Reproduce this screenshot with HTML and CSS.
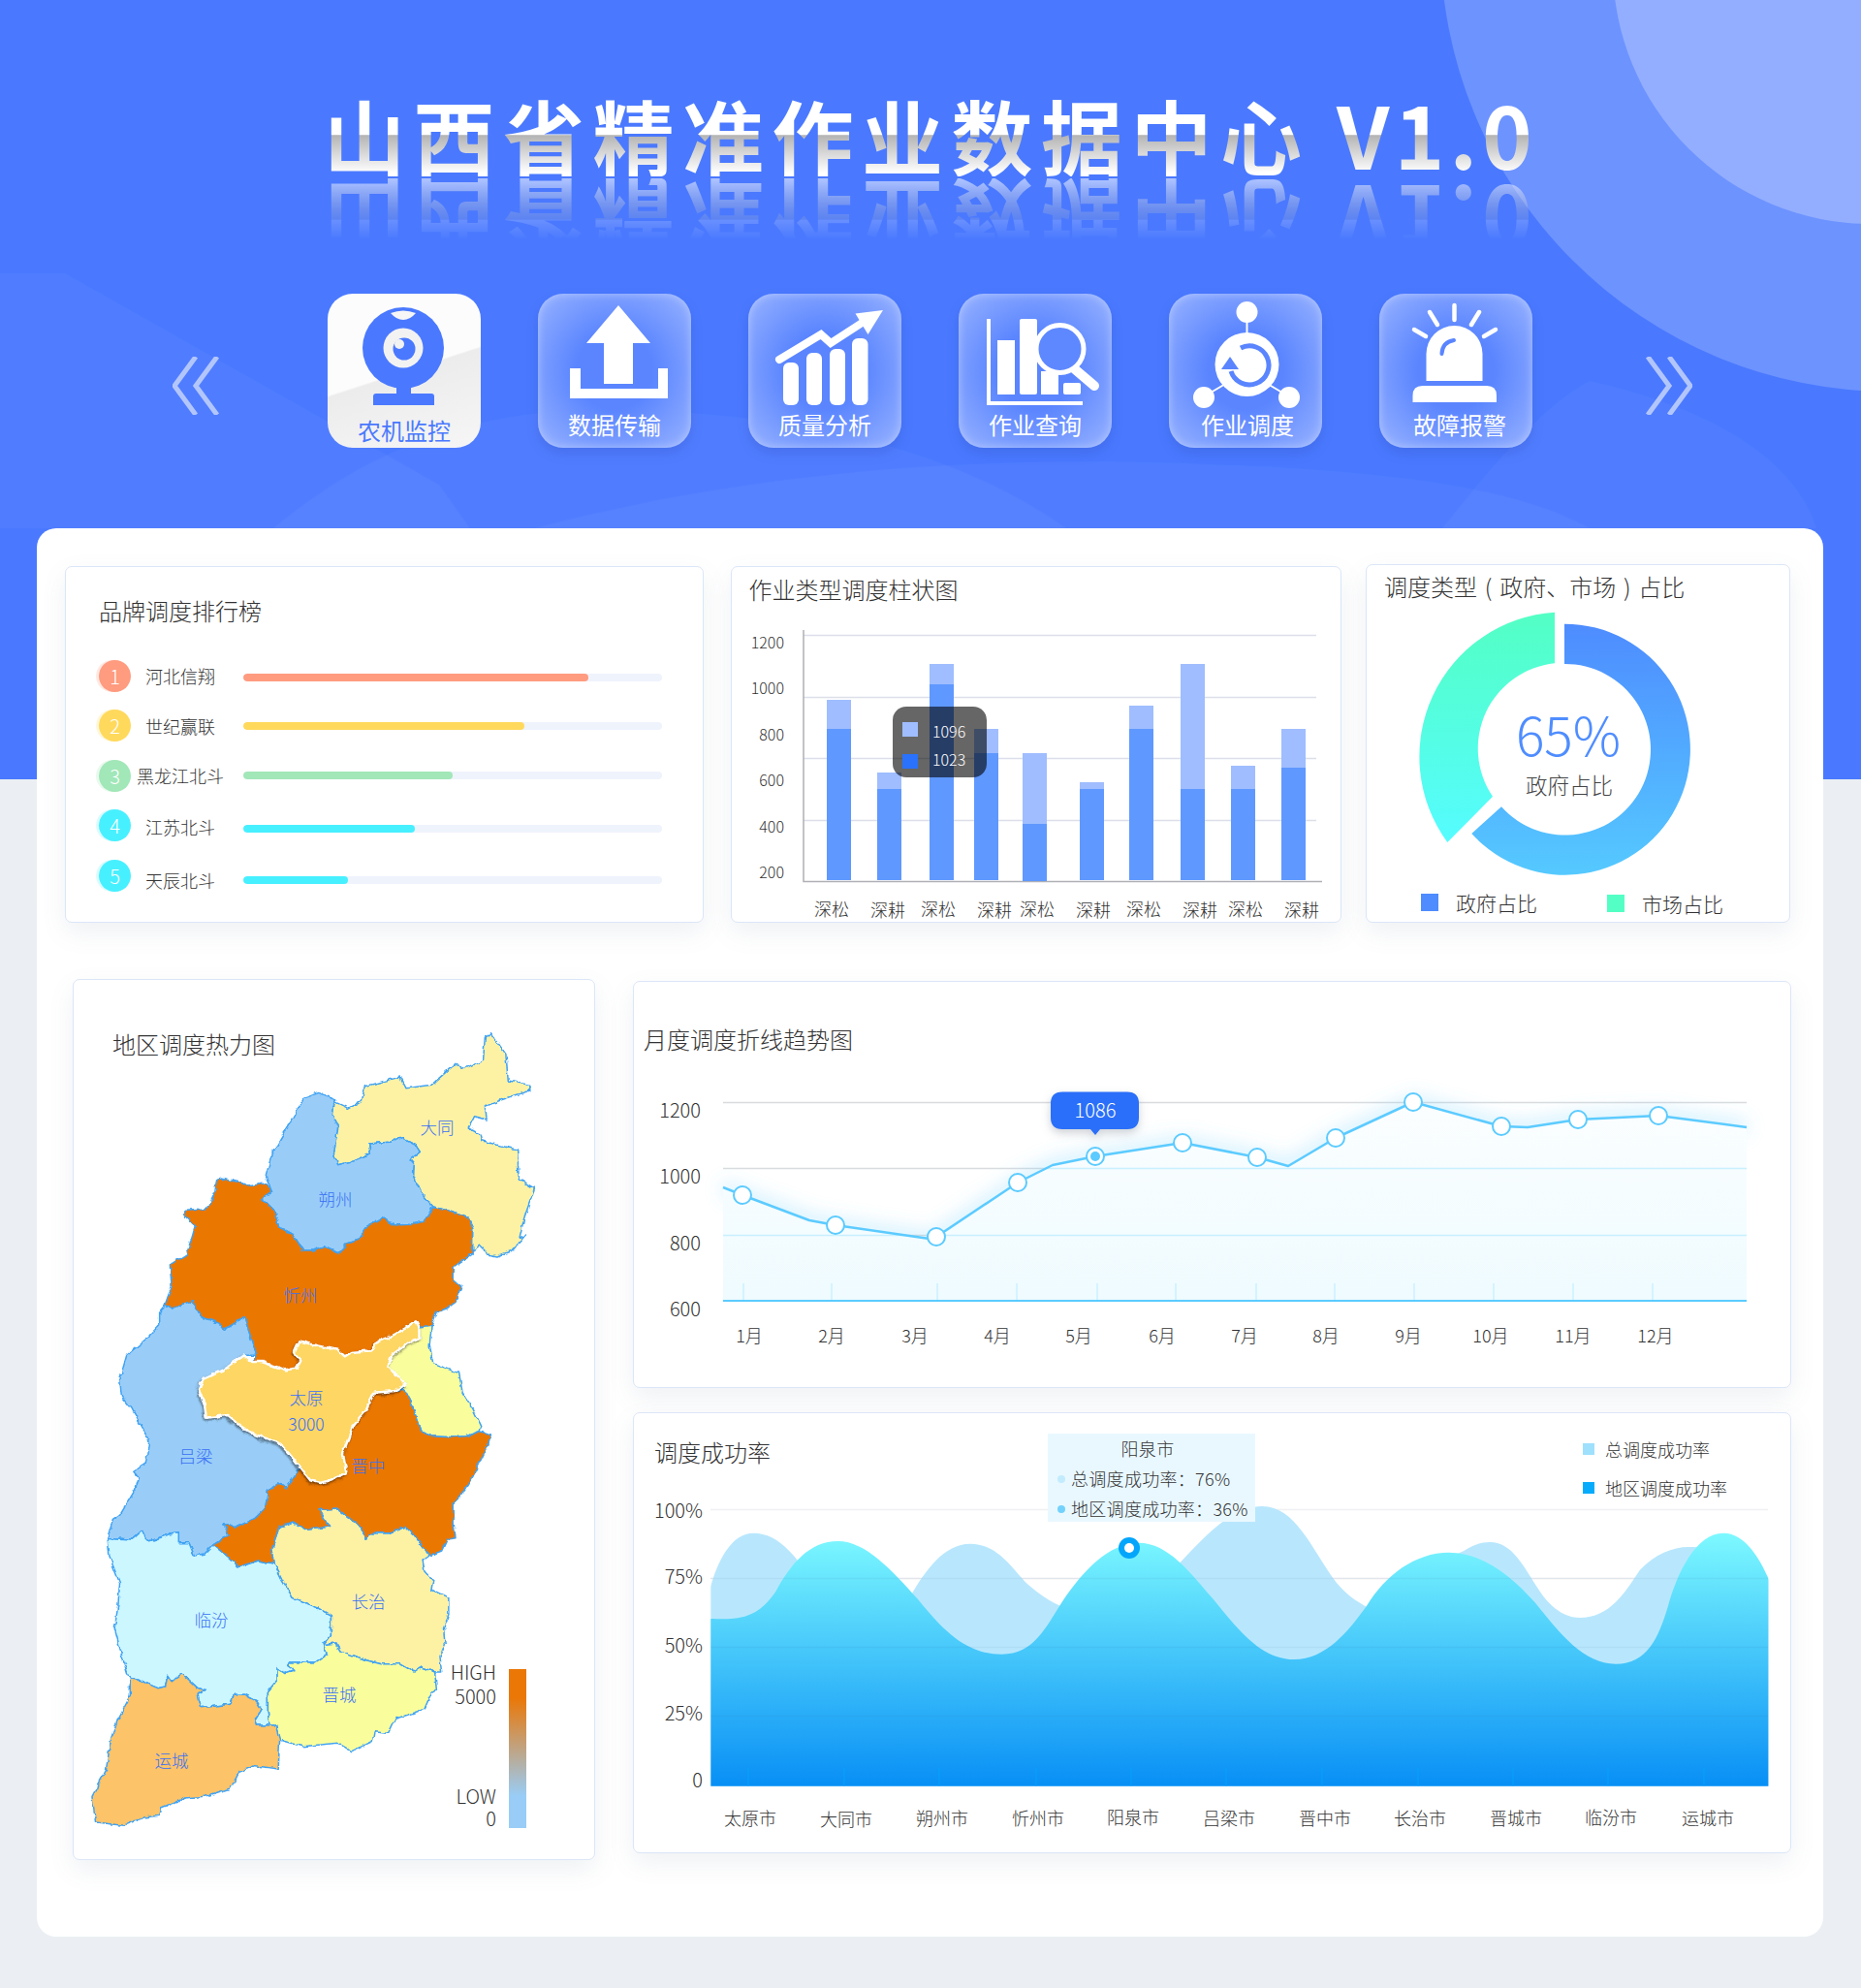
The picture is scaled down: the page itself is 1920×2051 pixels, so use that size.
FILE: index.html
```html
<!DOCTYPE html>
<html lang="zh-CN">
<head>
<meta charset="utf-8">
<title>山西省精准作业数据中心 V1.0</title>
<link rel="stylesheet" href="styles.css">
</head>
<body>
<div class="page">
  <header class="hero">
    <svg class="hero-decor" viewBox="0 0 1920 804" aria-hidden="true">
      <path class="swoosh" d="M0 282 L67 282 L453 500 L485 545 L0 545 Z"/>
      <path class="swoosh" d="M282 545 C420 430 560 410 735 428 C880 440 1010 480 1100 545 Z"/>
      <path class="swoosh" d="M551 545 C760 490 980 470 1224 478 C1420 485 1560 500 1640 545 Z"/>
      <path class="swoosh" d="M1488 545 C1540 480 1590 420 1640 393 C1760 420 1850 470 1874 545 Z"/>
      <circle class="disc-outer" cx="1950" cy="-60" r="464"/>
      <circle class="disc-inner" cx="1930" cy="-35" r="266"/>
    </svg>
    <h1 class="hero-title">山西省精准作业数据中心 <span class="hero-ver">V1.0</span></h1>
    <nav class="tiles">
      <svg class="chev chev-left" viewBox="0 0 49 60"><polyline points="24,0 2,30 24,60"/><polyline points="46,0 24,30 46,60"/></svg>
      <a class="tile tile-active">
        <svg class="tile-icon" viewBox="0 0 158 125">
          <circle class="ic-blue" cx="78" cy="56" r="42"/>
          <path class="ic-lens" d="M65 20 Q78 15 91 20 Q85 27 78 27 Q71 27 65 20 Z"/>
          <circle class="ic-ring" cx="78" cy="56" r="20.5"/>
          <circle class="ic-blue" cx="79" cy="57" r="11.5"/>
          <circle class="ic-ring" cx="74" cy="52" r="5"/>
          <rect class="ic-blue" x="71" y="92" width="15" height="14"/>
          <path class="ic-blue" d="M47 115 V106 Q47 103 50 103 H107 Q110 103 110 106 V115 Z"/>
        </svg>
        <span class="tile-label">农机监控</span>
      </a>
      <a class="tile">
        <svg class="tile-icon" viewBox="0 0 158 125">
          <path class="ic-white" d="M83 12 L116 51 H98 V93 H68 V51 H50 Z"/>
          <path class="ic-white" d="M33 77 H44 V98 H124 V77 H134 V108 H33 Z"/>
        </svg>
        <span class="tile-label">数据传输</span>
      </a>
      <a class="tile">
        <svg class="tile-icon" viewBox="0 0 158 125">
          <rect class="ic-white" x="36" y="71" width="16" height="44" rx="6"/>
          <rect class="ic-white" x="60" y="61" width="16" height="54" rx="6"/>
          <rect class="ic-white" x="84" y="57" width="16" height="58" rx="6"/>
          <rect class="ic-white" x="107" y="46" width="16.500" height="69" rx="6"/>
          <polyline class="ic-line8" points="32,68 75,42 85,51 122,27"/>
          <path class="ic-white" d="M139 17 L110.500 20.500 L123.500 42 Z"/>
        </svg>
        <span class="tile-label">质量分析</span>
      </a>
      <a class="tile">
        <svg class="tile-icon" viewBox="0 0 158 125">
          <path class="ic-white" d="M29 26 H33 V111 H128 V115 H29 Z"/>
          <rect class="ic-white" x="40" y="48" width="18" height="56"/>
          <rect class="ic-white" x="63" y="26" width="18" height="78" rx="2"/>
          <rect class="ic-white" x="85" y="80" width="18" height="24"/>
          <rect class="ic-white" x="108" y="92" width="18" height="12" rx="2"/>
          <line class="ic-handle" x1="120" y1="78" x2="140" y2="95"/>
          <circle class="ic-glass" cx="104.500" cy="57" r="24.500"/>
        </svg>
        <span class="tile-label">作业查询</span>
      </a>
      <a class="tile">
        <svg class="tile-icon" viewBox="0 0 158 125">
          <circle class="ic-white" cx="80.500" cy="19" r="11"/>
          <line class="ic-thin" x1="80.500" y1="20" x2="80.500" y2="45"/>
          <line class="ic-thin" x1="38" y1="105" x2="60" y2="92"/>
          <line class="ic-thin" x1="122" y1="105" x2="100" y2="92"/>
          <circle class="ic-white" cx="80.500" cy="73" r="33"/>
          <circle class="ic-white" cx="36" cy="107" r="11"/>
          <circle class="ic-white" cx="124" cy="107" r="11"/>
          <path class="ic-arc" d="M64 80 A20 20 0 1 0 74 56"/>
          <path class="ic-tint" d="M63 65 L72 78 H54 Z"/>
        </svg>
        <span class="tile-label tile-label-5">作业调度</span>
      </a>
      <a class="tile">
        <svg class="tile-icon" viewBox="0 0 158 125">
          <path class="ic-white" d="M48.500 90 V62 A29 29 0 0 1 106.500 62 V90 Z"/>
          <path class="ic-white" d="M34.500 112 V105 Q34.500 95 44.500 95 H111 Q121 95 121 105 V112 Z"/>
          <line class="ic-ray" x1="77.500" y1="12" x2="77.500" y2="27"/>
          <line class="ic-ray" x1="52" y1="19" x2="60" y2="32"/>
          <line class="ic-ray" x1="103" y1="19" x2="95" y2="32"/>
          <line class="ic-ray" x1="36" y1="37" x2="48" y2="44"/>
          <line class="ic-ray" x1="120" y1="37" x2="108" y2="44"/>
          <path class="ic-shine" d="M64.500 62 Q65 50 77 48"/>
        </svg>
        <span class="tile-label tile-label-6">故障报警</span>
      </a>
      <svg class="chev chev-right" viewBox="0 0 49 60"><polyline points="3,0 25,30 3,60"/><polyline points="25,0 47,30 25,60"/></svg>
    </nav>
  </header>

  <main class="panel">
    <section class="row-top">
      <article class="card card-rank">
        <h2 class="card-title">品牌调度排行榜</h2>
        <ul class="rank-list">
          <li class="rank-row"><span class="rank-no rank-1">1</span><span class="rank-name">河北信翔</span><span class="rank-track"><span class="rank-fill fill-1" style="width:82.400%"></span></span></li>
          <li class="rank-row"><span class="rank-no rank-2">2</span><span class="rank-name">世纪赢联</span><span class="rank-track"><span class="rank-fill fill-2" style="width:67.100%"></span></span></li>
          <li class="rank-row"><span class="rank-no rank-3">3</span><span class="rank-name">黑龙江北斗</span><span class="rank-track"><span class="rank-fill fill-3" style="width:50.100%"></span></span></li>
          <li class="rank-row"><span class="rank-no rank-4">4</span><span class="rank-name">江苏北斗</span><span class="rank-track"><span class="rank-fill fill-4" style="width:41%"></span></span></li>
          <li class="rank-row"><span class="rank-no rank-4">5</span><span class="rank-name">天辰北斗</span><span class="rank-track"><span class="rank-fill fill-4" style="width:25%"></span></span></li>
        </ul>
      </article>

      <article class="card card-bars">
        <h2 class="card-title">作业类型调度柱状图</h2>
        <svg class="chart chart-bars" viewBox="754 627 629 324">
          <g class="grid">
            <line x1="828" y1="655.500" x2="1357" y2="655.500"/><line x1="828" y1="719.500" x2="1357" y2="719.500"/>
            <line x1="828" y1="782.500" x2="1357" y2="782.500"/><line x1="828" y1="846.500" x2="1357" y2="846.500"/>
          </g>
          <path class="axis" d="M828 650 V909.500 H1363"/>
          <g class="bar-light">
            <rect x="852" y="722" width="25" height="186"/><rect x="904" y="797" width="25" height="111"/>
            <rect x="958" y="685" width="25" height="223"/><rect x="1004" y="752" width="25" height="156"/>
            <rect x="1054" y="777" width="25" height="131"/><rect x="1113" y="807" width="25" height="101"/>
            <rect x="1164" y="728" width="25" height="180"/><rect x="1217" y="685" width="25" height="223"/>
            <rect x="1269" y="790" width="25" height="118"/><rect x="1321" y="752" width="25" height="156"/>
          </g>
          <g class="bar-dark">
            <rect x="852" y="752" width="25" height="156"/><rect x="904" y="814" width="25" height="94"/>
            <rect x="958" y="706" width="25" height="202"/><rect x="1004" y="777" width="25" height="131"/>
            <rect x="1054" y="850" width="25" height="59"/><rect x="1113" y="814" width="25" height="94"/>
            <rect x="1164" y="752" width="25" height="156"/><rect x="1217" y="814" width="25" height="94"/>
            <rect x="1269" y="814" width="25" height="94"/><rect x="1321" y="792" width="25" height="116"/>
          </g>
          <g class="tick-y tick-16">
            <text x="808" y="663">1200</text><text x="808" y="710">1000</text><text x="808" y="758">800</text>
            <text x="808" y="805">600</text><text x="808" y="853">400</text><text x="808" y="900">200</text>
          </g>
          <g class="tick-x tick-18">
            <text x="857" y="938">深松</text><text x="915" y="939">深耕</text><text x="967" y="938">深松</text>
            <text x="1025" y="939">深耕</text><text x="1069" y="938">深松</text><text x="1127" y="939">深耕</text>
            <text x="1179" y="938">深松</text><text x="1237" y="939">深耕</text><text x="1284" y="938">深松</text>
            <text x="1342" y="939">深耕</text>
          </g>
          <rect class="tip-dark" x="920" y="729" width="97" height="73" rx="14"/>
          <rect class="tip-swatch-a" x="930" y="745" width="16" height="15"/>
          <rect class="tip-swatch-b" x="930" y="778" width="16" height="15"/>
          <text class="tip-num" x="961" y="755">1096</text>
          <text class="tip-num" x="961" y="784">1023</text>
        </svg>
      </article>

      <article class="card card-donut">
        <h2 class="card-title">调度类型 ( 政府、市场 ) 占比</h2>
        <svg class="chart chart-donut" viewBox="1410 623 436 290">
          <defs>
            <linearGradient id="gradGov" x1="0" y1="0" x2="0" y2="1"><stop offset="0" stop-color="#4e8cff"/><stop offset="1" stop-color="#55c9ff"/></linearGradient>
            <linearGradient id="gradMkt" x1="0" y1="0" x2="0" y2="1"><stop offset="0" stop-color="#53ffc4"/><stop offset="1" stop-color="#55fcff"/></linearGradient>
          </defs>
          <path fill="url(#gradMkt)" d="M1604 631.700 A149.300 149.300 0 0 0 1493.300 869 L1540 821.700 A88.300 88.300 0 0 1 1604 684.300 Z"/>
          <path fill="url(#gradGov)" d="M1614 643.700 A129.500 129.500 0 1 1 1518.300 860 L1549 832.300 A88.300 88.300 0 1 0 1614 685 Z"/>
          <text class="donut-pct" x="1618" y="757">65%</text>
          <text class="donut-sub" x="1619" y="810">政府占比</text>
        </svg>
        <div class="donut-legend">
          <span class="dl-item"><i class="dl-swatch dl-gov"></i>政府占比</span>
          <span class="dl-item dl-second"><i class="dl-swatch dl-mkt"></i>市场占比</span>
        </div>
      </article>
    </section>

    <section class="row-bottom">
      <article class="card card-map">
        <h2 class="card-title">地区调度热力图</h2>
        <svg class="map" viewBox="76 1011 537 907">
          <defs>
            <filter id="rough" filterUnits="userSpaceOnUse" x="70" y="1005" width="545" height="915">
              <feTurbulence type="fractalNoise" baseFrequency="0.14" numOctaves="2" seed="7" result="n"/>
              <feDisplacementMap in="SourceGraphic" in2="n" scale="5" xChannelSelector="R" yChannelSelector="G"/>
            </filter>
            <linearGradient id="gradHeat" x1="0" y1="0" x2="0" y2="1"><stop offset=".18" stop-color="#ea7706"/><stop offset=".8" stop-color="#99cdf7"/></linearGradient>
          </defs>
          <g filter="url(#rough)">
            <g transform="translate(70 1000) scale(.35714 .33333)">
              <polygon class="rg rg-dt" points="770,410 810,430 850,405 858,362 960,333 977,368 1050,358 1120,292 1140,310 1200,280 1205,210 1222,197 1265,262 1272,345 1335,358 1335,375 1250,405 1205,425 1210,465 1175,455 1157,492 1190,510 1195,530 1245,545 1298,558 1303,650 1348,678 1318,770 1305,830 1320,825 1285,870 1240,888 1215,882 1190,855 1170,870 1168,800 1155,765 1110,750 1055,735 1020,690 998,640 1000,605 988,590 1017,565 1005,545 960,520 930,535 870,540 875,570 820,595 780,605 768,570 780,490 765,450"/>
              <polygon class="rg rg-sz" points="725,382 775,405 770,410 765,450 780,490 768,570 780,605 820,595 875,570 870,540 930,535 960,520 1005,545 1017,565 988,590 1000,605 998,640 1020,690 1055,735 1030,780 990,790 950,792 925,785 915,768 865,795 840,835 810,845 780,878 765,870 740,858 710,870 680,870 650,820 625,805 610,800 595,745 562,710 590,690 572,640 590,570 640,480 680,400"/>
              <polygon class="rg rg-lv" points="280,1040 300,1050 360,1025 385,1075 435,1095 450,1115 510,1078 520,1110 545,1195 510,1195 450,1240 390,1270 378,1300 395,1350 400,1388 460,1380 500,1415 540,1440 610,1465 640,1500 670,1545 630,1605 610,1590 578,1615 570,1670 540,1700 480,1730 450,1715 465,1750 420,1782 395,1810 365,1815 350,1775 320,1775 320,1745 290,1750 235,1770 210,1742 185,1765 130,1760 115,1760 130,1705 150,1690 195,1610 205,1575 190,1555 225,1530 235,1460 215,1420 185,1360 155,1320 150,1270 170,1195 230,1140 265,1100 265,1060"/>
              <polygon class="rg rg-xz" points="430,650 445,645 500,660 520,672 572,662 590,690 562,710 595,745 610,800 625,805 650,820 680,870 710,870 740,858 765,870 780,878 810,845 840,835 865,795 915,768 925,785 950,792 990,790 1030,780 1055,735 1110,750 1155,765 1170,800 1168,880 1115,920 1115,965 1138,985 1120,1030 1095,1050 1065,1060 1050,1105 1015,1110 1005,1090 985,1105 945,1130 890,1155 880,1180 820,1185 800,1198 780,1178 745,1170 700,1160 670,1150 655,1185 670,1215 660,1235 630,1240 560,1215 530,1215 545,1195 520,1110 510,1078 450,1115 435,1095 385,1075 360,1025 300,1050 280,1040 300,980 295,915 345,880 368,795 335,760 340,745 405,740 425,690"/>
              <polygon class="rg rg-yq" points="1015,1110 1050,1105 1045,1165 1055,1220 1130,1250 1140,1310 1170,1360 1195,1415 1190,1430 1150,1445 1105,1448 1050,1445 1020,1430 985,1320 965,1300 975,1285 925,1230 935,1195 985,1155 1015,1140"/>
              <polygon class="rg rg-lf" points="115,1760 130,1760 185,1765 210,1742 235,1770 290,1750 320,1745 320,1775 350,1775 365,1815 395,1810 420,1782 465,1820 495,1850 550,1830 597,1840 620,1890 650,1945 720,1975 760,2000 760,2060 738,2090 748,2120 715,2145 640,2145 635,2155 655,2170 630,2180 605,2162 605,2200 578,2235 578,2300 583,2340 545,2340 540,2325 560,2290 545,2265 510,2245 480,2245 470,2275 385,2285 375,2245 398,2230 375,2225 350,2200 330,2180 300,2205 288,2185 282,2220 260,2225 205,2200 180,2195 175,2190 155,2120 135,2040 145,1970 150,1900 130,1845 120,1815"/>
              <polygon class="rg rg-cz" points="725,1670 740,1675 780,1670 810,1695 850,1730 860,1765 880,1745 930,1745 975,1725 1000,1750 1045,1815 1025,1830 1030,1860 1055,1890 1050,1920 1100,1945 1100,2000 1085,2040 1090,2090 1075,2130 1080,2175 1060,2175 1020,2160 1000,2175 960,2150 905,2150 850,2135 790,2110 775,2085 738,2090 760,2060 760,2000 720,1975 650,1945 620,1890 597,1840 590,1790 610,1728 650,1710 690,1735 755,1725"/>
              <polygon class="rg rg-jc" points="775,2085 790,2110 850,2135 905,2150 960,2150 1000,2175 1020,2160 1060,2175 1065,2230 1050,2240 1030,2290 975,2310 945,2320 925,2365 885,2360 880,2390 820,2420 780,2395 680,2405 610,2385 600,2340 583,2340 578,2300 578,2235 605,2200 605,2162 630,2180 655,2170 635,2155 640,2145 715,2145 748,2120 738,2090"/>
              <polygon class="rg rg-yc" points="180,2195 205,2200 260,2225 282,2220 288,2185 300,2205 330,2180 350,2200 375,2225 398,2230 375,2245 385,2285 470,2275 480,2245 510,2245 545,2265 560,2290 540,2325 545,2340 583,2340 600,2340 612,2385 608,2475 540,2465 495,2485 470,2535 395,2560 340,2565 270,2595 265,2620 220,2625 160,2650 80,2640 70,2560 110,2480 125,2380 145,2320 180,2250"/>
              <polygon class="rg rg-jz" points="985,1320 1020,1430 1050,1445 1105,1448 1150,1445 1190,1430 1222,1440 1215,1470 1170,1570 1140,1620 1115,1650 1115,1720 1120,1760 1095,1765 1080,1800 1045,1815 1000,1750 975,1725 930,1745 880,1745 860,1765 850,1730 810,1695 780,1670 740,1675 725,1670 755,1725 690,1735 650,1710 610,1728 590,1790 597,1840 550,1830 495,1850 465,1820 420,1782 465,1750 450,1715 480,1730 540,1700 570,1670 578,1615 610,1590 630,1605 670,1545 680,1555 700,1582 730,1590 760,1580 805,1560 795,1500 820,1420 825,1410 860,1365 885,1310 945,1305 965,1300"/>
              <polygon class="rg rg-ty" points="1005,1090 1015,1110 1015,1140 985,1155 935,1195 925,1230 975,1285 945,1305 885,1310 860,1365 825,1410 820,1420 795,1500 805,1560 760,1580 730,1590 700,1582 680,1555 640,1500 610,1465 540,1440 500,1415 460,1380 400,1388 395,1350 378,1300 390,1270 450,1240 510,1195 530,1215 560,1215 630,1240 660,1235 670,1215 655,1185 670,1150 700,1160 745,1170 780,1178 800,1198 820,1185 880,1180 890,1155 945,1130 985,1105"/>
            </g>
          </g>
          <g class="map-labels">
            <text x="451" y="1164">大同</text><text x="346" y="1238">朔州</text><text x="310" y="1337">忻州</text>
            <text x="316" y="1443">太原</text><text x="316" y="1470">3000</text><text x="202" y="1503">吕梁</text>
            <text x="380" y="1513">晋中</text><text x="380" y="1653">长治</text><text x="218" y="1672">临汾</text>
            <text x="350" y="1749">晋城</text><text x="177" y="1817">运城</text>
          </g>
          <rect x="525" y="1722" width="18" height="164" fill="url(#gradHeat)"/>
          <g class="tick-y tick-20">
            <text x="512" y="1726">HIGH</text><text x="512" y="1751">5000</text>
            <text x="512" y="1854">LOW</text><text x="512" y="1877">0</text>
          </g>
        </svg>
      </article>

      <div class="col-right">
        <article class="card card-line">
          <h2 class="card-title">月度调度折线趋势图</h2>
          <svg class="chart chart-line" viewBox="654 1090 1193 341">
            <defs>
              <linearGradient id="gradLine" x1="0" y1="0" x2="0" y2="1"><stop offset="0" stop-color="#fbfeff"/><stop offset="1" stop-color="#effbff"/></linearGradient>
              <clipPath id="clipLine"><path d="M746 1225 L835 1259 L959 1278 L1050 1220 L1086 1202 L1130 1193 L1220 1179 L1297 1194 L1329 1203 L1378 1174 L1458 1137 L1549 1162 L1576 1163 L1628 1155 L1711 1151 L1802 1163 V1342 H746 Z"/></clipPath>
              <filter id="lineGlow" x="-5%" y="-30%" width="110%" height="160%"><feGaussianBlur stdDeviation="9"/></filter>
            </defs>
            <g class="grid grid-line">
              <line x1="746" y1="1137.500" x2="1802" y2="1137.500"/><line x1="746" y1="1205.500" x2="1802" y2="1205.500"/>
              <line x1="746" y1="1274.500" x2="1802" y2="1274.500"/>
            </g>
            <polyline class="line-glow" filter="url(#lineGlow)" points="746,1225 766,1233 835,1259 862,1264 959,1278 966,1276 1050,1220 1086,1202 1130,1193 1220,1179 1297,1194 1329,1203 1378,1174 1458,1137 1549,1162 1576,1163 1628,1155 1711,1151 1802,1163"/>
            <path class="line-area" d="M746 1225 L766 1233 L835 1259 L862 1264 L959 1278 L966 1276 L1050 1220 L1086 1202 L1130 1193 L1220 1179 L1297 1194 L1329 1203 L1378 1174 L1458 1137 L1549 1162 L1576 1163 L1628 1155 L1711 1151 L1802 1163 V1342 H746 Z"/>
            <g class="grid-in" clip-path="url(#clipLine)">
              <line x1="746" y1="1205.500" x2="1802" y2="1205.500"/><line x1="746" y1="1274.500" x2="1802" y2="1274.500"/>
            </g>
            <path class="line-ticks" d="M767 1324V1342M858 1324V1342M967 1324V1342M1049 1324V1342M1132 1324V1342M1213 1324V1342M1296 1324V1342M1377 1324V1342M1459 1324V1342M1541 1324V1342M1623 1324V1342M1705 1324V1342"/>
            <line class="line-base" x1="746" y1="1342" x2="1802" y2="1342"/>
            <polyline class="line-main" points="746,1225 766,1233 835,1259 862,1264 959,1278 966,1276 1050,1220 1086,1202 1130,1193 1220,1179 1297,1194 1329,1203 1378,1174 1458,1137 1549,1162 1576,1163 1628,1155 1711,1151 1802,1163"/>
            <g class="line-dots">
              <circle cx="766" cy="1233" r="9"/><circle cx="862" cy="1264" r="9"/><circle cx="966" cy="1276" r="9"/>
              <circle cx="1050" cy="1220" r="9"/><circle cx="1130" cy="1193" r="9"/><circle cx="1220" cy="1179" r="9"/>
              <circle cx="1297" cy="1194" r="9"/><circle cx="1378" cy="1174" r="9"/><circle cx="1458" cy="1137" r="9"/>
              <circle cx="1549" cy="1162" r="9"/><circle cx="1628" cy="1155" r="9"/><circle cx="1711" cy="1151" r="9"/>
            </g>
            <circle class="dot-core" cx="1130" cy="1193" r="5"/>
            <path class="tip-blue" d="M1096 1126.500 H1163 Q1175 1126.500 1175 1138.500 V1153 Q1175 1165 1163 1165 H1135 L1130 1171 L1125 1165 H1096 Q1084 1165 1084 1153 V1138.500 Q1084 1126.500 1096 1126.500 Z"/>
            <text class="tip-blue-text" x="1130" y="1146">1086</text>
            <g class="tick-y tick-20">
              <text x="723" y="1146">1200</text><text x="723" y="1214">1000</text><text x="723" y="1283">800</text><text x="723" y="1351">600</text>
            </g>
            <g class="tick-x tick-18">
              <text x="773" y="1378">1月</text><text x="858" y="1378">2月</text><text x="944" y="1378">3月</text><text x="1029" y="1378">4月</text>
              <text x="1113" y="1378">5月</text><text x="1199" y="1378">6月</text><text x="1284" y="1378">7月</text><text x="1368" y="1378">8月</text>
              <text x="1453" y="1378">9月</text><text x="1538" y="1378">10月</text><text x="1623" y="1378">11月</text><text x="1708" y="1378">12月</text>
            </g>
          </svg>
        </article>

        <article class="card card-area">
          <div class="area-head">
            <h2 class="card-title">调度成功率</h2>
            <ul class="area-legend">
              <li class="al-item"><i class="al-swatch al-total"></i>总调度成功率</li>
              <li class="al-item"><i class="al-swatch al-region"></i>地区调度成功率</li>
            </ul>
          </div>
          <svg class="chart chart-area" viewBox="654 1550 1193 361">
            <defs>
              <linearGradient id="gradFront" x1="0" y1="0" x2="0" y2="1"><stop offset="0" stop-color="#7df9ff"/><stop offset="1" stop-color="#088ff5"/></linearGradient>
            </defs>
            <g class="grid grid-area">
              <line x1="733" y1="1557.500" x2="1824" y2="1557.500"/><line x1="733" y1="1628.500" x2="1824" y2="1628.500"/>
            </g>
            <g transform="translate(650 1450) scale(.7716 .33333)">
              <path class="area-back" d="M108 560 C120 460 140 395 165 395 C200 395 225 470 260 600 C300 650 340 610 375 590 C395 510 420 428 455 428 C490 428 510 500 530 550 C555 600 570 620 600 640 C650 650 690 600 730 500 C770 400 805 312 845 312 C890 312 910 440 945 550 C960 590 975 615 1000 640 C1040 640 1080 480 1115 450 C1125 435 1135 423 1150 423 C1180 423 1195 500 1215 570 C1230 625 1250 657 1270 657 C1310 657 1330 580 1350 510 C1370 460 1395 438 1415 438 C1470 438 1500 500 1522 540 V1178 H108 Z"/>
              <path fill="url(#gradFront)" d="M108 660 C115 660 125 662 135 660 C165 655 180 625 195 575 C215 490 240 420 278 420 C315 420 350 510 385 600 C420 700 450 770 497 770 C540 770 555 690 580 600 C605 515 640 425 680 425 C720 425 750 520 780 600 C815 700 845 786 888 786 C930 786 960 700 985 620 C1010 525 1050 455 1095 455 C1140 455 1180 530 1210 610 C1245 710 1275 800 1318 800 C1360 800 1375 720 1388 620 C1400 520 1425 395 1462 395 C1490 395 1510 470 1522 535 V1178 H108 Z"/>
            </g>
            <g class="grid grid-over">
              <line x1="733" y1="1628.500" x2="1824" y2="1628.500"/><line x1="733" y1="1699.500" x2="1824" y2="1699.500"/><line x1="733" y1="1770.500" x2="1824" y2="1770.500"/>
            </g>
            <path class="area-ticks" d="M772 1824V1843M871 1824V1843M969 1824V1843M1069 1824V1843M1167 1824V1843M1265 1824V1843M1364 1824V1843M1463 1824V1843M1561 1824V1843M1659 1824V1843M1758 1824V1843"/>
            <circle class="marker-o" cx="1165" cy="1597" r="11"/>
            <circle class="marker-i" cx="1165" cy="1597" r="5"/>
            <g class="tick-y tick-20">
              <text x="725" y="1559">100%</text><text x="725" y="1627">75%</text><text x="725" y="1698">50%</text>
              <text x="725" y="1768">25%</text><text x="725" y="1837">0</text>
            </g>
            <g class="tick-x tick-18">
              <text x="774" y="1876">太原市</text><text x="873" y="1877">大同市</text><text x="972" y="1876">朔州市</text>
              <text x="1071" y="1876">忻州市</text><text x="1169" y="1875">阳泉市</text><text x="1268" y="1876">吕梁市</text>
              <text x="1367" y="1876">晋中市</text><text x="1465" y="1876">长治市</text><text x="1564" y="1876">晋城市</text>
              <text x="1662" y="1875">临汾市</text><text x="1762" y="1876">运城市</text>
            </g>
          </svg>
          <div class="area-tip">
            <div class="at-title">阳泉市</div>
            <div class="at-row"><i class="at-dot at-a"></i>总调度成功率：76%</div>
            <div class="at-row"><i class="at-dot at-b"></i>地区调度成功率：36%</div>
          </div>
        </article>
      </div>
    </section>
  </main>
</div>
</body>
</html>
```

FILE: styles.css
```css
* { box-sizing: border-box; }
html, body { margin: 0; padding: 0; }
body {
  font-family: "Noto Sans CJK SC", "Noto Sans", sans-serif;
  font-weight: 300;
  color: #333;
}
.page {
  width: 1920px;
  height: 2051px;
  overflow: hidden;
  background: linear-gradient(#4a79ff 804px, #ebeff3 804px);
}

/* hero */
.hero {
  position: relative;
  height: 545px;
  padding-top: 92px;
}
.hero-decor {
  position: absolute;
  left: 0;
  top: 0;
  width: 1920px;
  height: 804px;
}
.swoosh { fill: #fff; opacity: .035; }
.disc-outer { fill: #6d93ff; }
.disc-inner { fill: #93aeff; }
.hero-title {
  position: relative;
  width: max-content;
  height: 90px;
  margin: 0 auto 121px;
  padding: 0;
  font-family: "Noto Sans CJK SC", "Liberation Sans", sans-serif;
  font-size: 84px;
  font-weight: 700;
  line-height: 90px;
  letter-spacing: 8.500px;
  white-space: nowrap;
  color: transparent;
  background: linear-gradient(#fff 0%, #fff 52%, #b4b4b4 53%, #fff 96%);
  -webkit-background-clip: text;
  background-clip: text;
  -webkit-box-reflect: below 2px linear-gradient(transparent 30%, rgba(255, 255, 255, .55));
}
.hero-ver { font-size: 88px; letter-spacing: 5px; }
.tiles {
  position: relative;
  display: flex;
  align-items: flex-start;
  gap: 59px;
  padding-left: 338px;
}
.tile {
  display: flex;
  flex-direction: column;
  align-items: center;
  flex: none;
  width: 158px;
  height: 159px;
  border-radius: 26px;
  background: radial-gradient(ellipse at 50% 50%, #5a85ff 35%, #a2baff 110%);
  box-shadow: inset 0 0 10px rgba(255, 255, 255, .35), 0 6px 12px rgba(40, 70, 170, .22);
}
.tile-active {
  background: linear-gradient(162deg, #fcfcfc 50%, #ececec 51%, #f6f6f6 100%);
  box-shadow: none;
}
.tile-icon { display: block; width: 158px; height: 125px; flex: none; }
.tile-label {
  margin-top: -6px;
  font-size: 24px;
  font-weight: 400;
  line-height: 32px;
  color: #fff;
}
.tile-label-5 { margin-left: 4px; }
.tile-label-6 { margin-left: 8px; }
.tile-active .tile-label { margin-top: 0; color: #4a79ff; }
.ic-white { fill: #fff; }
.ic-blue { fill: #4a79ff; }
.ic-ring { fill: #f2f2f2; }
.ic-lens { fill: #f6f6f6; }
.ic-tint { fill: #5a85ff; }
.ic-line8 { fill: none; stroke: #fff; stroke-width: 8; stroke-linecap: round; stroke-linejoin: miter; }
.ic-handle { stroke: #fff; stroke-width: 10; stroke-linecap: round; }
.ic-glass { fill: #5e88ff; stroke: #fff; stroke-width: 5; }
.ic-thin { stroke: #fff; stroke-width: 2; }
.ic-arc { fill: none; stroke: #5a85ff; stroke-width: 5; }
.ic-ray { stroke: #fff; stroke-width: 4.500; stroke-linecap: round; }
.ic-shine { fill: none; stroke: #5a85ff; stroke-width: 4; stroke-linecap: round; }
.chev {
  position: absolute;
  top: 65px;
  width: 49px;
  height: 60px;
}
.chev-left { left: 178px; }
.chev-right { left: 1697px; }
.chev polyline { fill: none; stroke: #b3c6fc; stroke-width: 5; }

/* panel and cards */
.panel {
  position: relative;
  width: 1843px;
  height: 1453px;
  margin-left: 38px;
  background: #fff;
  border-radius: 20px;
}
.row-top {
  display: flex;
  align-items: flex-end;
  gap: 26px;
  height: 407px;
  padding-left: 29px;
}
.row-bottom {
  display: flex;
  align-items: flex-start;
  gap: 39px;
  margin-top: 58px;
  padding-left: 37px;
}
.col-right {
  display: flex;
  flex-direction: column;
  gap: 25px;
  width: 1195px;
  margin-top: 2px;
}
.card {
  position: relative;
  flex: none;
  background: #fff;
  border: 1px solid #dbe6f8;
  border-radius: 7px;
  box-shadow: 0 10px 26px rgba(100, 120, 150, .1);
}
.card-title {
  margin: -1.500px 0 1.500px;
  font-size: 24px;
  font-weight: 300;
  line-height: 34px;
  color: #333;
}
.chart { display: block; }
.chart text, .map text {
  font-family: "Noto Sans CJK SC", "Noto Sans", sans-serif;
  dominant-baseline: central;
  transform: translateY(-1.500px);
}

/* rank */
.card-rank { width: 659px; height: 368px; padding: 29px 0 0 34px; }
.rank-list {
  display: flex;
  flex-direction: column;
  gap: 18.500px;
  margin: 34px 0 0;
  padding: 0;
  list-style: none;
}
.rank-row { display: flex; align-items: center; height: 33px; }
.rank-no {
  flex: none;
  width: 33px;
  height: 33px;
  border-radius: 50%;
  font-size: 20px;
  line-height: 33px;
  text-align: center;
  color: #fff;
}
.rank-1 { background: #ff9b7f; box-shadow: -3px 0 0 #ffe9e2; }
.rank-2 { background: #ffd95c; box-shadow: -3px 0 0 #fff7dc; }
.rank-3 { background: #a1e7b8; box-shadow: -3px 0 0 #e9f9ee; }
.rank-4 { background: #47f0ff; box-shadow: -3px 0 0 #dbfbff; }
.rank-name {
  flex: none;
  width: 116px;
  padding-right: 14px;
  font-size: 18px;
  line-height: 24px;
  text-align: center;
  white-space: nowrap;
  color: #333;
}
.rank-track {
  flex: none;
  width: 432px;
  height: 8px;
  border-radius: 4px;
  background: #eff3fc;
  overflow: hidden;
}
.rank-row:nth-child(1) .rank-track { margin-top: 4px; }
.rank-row:nth-child(4) .rank-track { margin-top: 6px; }
.rank-row:nth-child(5) .rank-track { margin-top: 9px; }
.rank-row:nth-child(4) .rank-name { margin-top: 2px; }
.rank-row:nth-child(5) .rank-name { margin-top: 9px; }
.rank-fill { display: block; height: 8px; border-radius: 4px; }
.fill-1 { background: #ff9b7f; }
.fill-2 { background: #ffd95c; }
.fill-3 { background: #a1e7b8; }
.fill-4 { background: #47f0ff; }

/* bar chart */
.card-bars { width: 630px; height: 368px; margin-left: 1.500px; }
.card-bars .card-title { padding: 7px 0 1px 18px; }
.chart-bars { width: 629px; height: 324px; }
.grid line { stroke: #dcdfe9; stroke-width: 1.500; }
.axis { fill: none; stroke: #aeb0b6; stroke-width: 1.500; }
.bar-light rect { fill: #9fbdff; }
.bar-dark rect { fill: #5f98ff; }
.tick-y text { text-anchor: end; fill: #333; }
.tick-x text { text-anchor: middle; fill: #333; }
.tick-16 text { font-size: 16px; }
.tick-18 text { font-size: 18px; }
.tick-20 text { font-size: 20px; }
.tip-dark { fill: rgba(0, 0, 0, .6); }
.tip-swatch-a { fill: #9fbdff; }
.tip-swatch-b { fill: #2a72fb; }
.tip-num { font-size: 16px; fill: #fff; }

/* donut */
.card-donut { width: 438px; height: 370px; margin-left: -.500px; }
.card-donut .card-title { padding: 6px 0 0 18px; word-spacing: 2.500px; }
.chart-donut { width: 436px; height: 290px; }
.donut-pct { font-size: 55px; fill: #4f8dff; text-anchor: middle; }
.donut-sub { font-size: 22.500px; fill: #444; text-anchor: middle; }
.donut-legend {
  display: flex;
  padding: 0 0 0 56px;
  font-size: 21px;
  line-height: 34px;
  color: #333;
}
.dl-item { display: flex; align-items: center; gap: 18px; width: 194px; }
.dl-second { padding-top: 2px; margin-left: 4px; }
.dl-swatch { flex: none; width: 18px; height: 18px; }
.dl-gov { background: #4e8cff; }
.dl-mkt { background: #53ffc4; }

/* map */
.card-map { width: 539px; height: 909px; padding: 50px 0 0 40px; }
.map { position: absolute; left: 0; top: 0; width: 537px; height: 907px; }
.rg { stroke: #3fa2f4; stroke-width: 1.500; vector-effect: non-scaling-stroke; stroke-linejoin: round; }
.rg-dt, .rg-cz { fill: #fdf2a4; }
.rg-sz, .rg-lv { fill: #99cdf7; }
.rg-xz, .rg-jz { fill: #ea7706; }
.rg-yq, .rg-jc { fill: #f9fd9c; }
.rg-lf { fill: #ccf7ff; }
.rg-yc { fill: #fcc368; }
.rg-ty {
  fill: #fdd663;
  stroke: #fff;
  stroke-width: 2.500;
  filter: drop-shadow(-2px 5px 3px rgba(0, 0, 0, .5));
}
.map-labels text { font-size: 17.500px; fill: #3a70f5; text-anchor: middle; }

/* line chart */
.card-line { height: 420px; }
.card-line .card-title { padding: 43px 0 0 10px; }
.chart-line { width: 1193px; height: 341px; }
.grid-line line { stroke: #d9dcdf; stroke-width: 1.500; }
.line-area { fill: url(#gradLine); }
.grid-in line { stroke: #c8f0ff; stroke-width: 1.500; }
.line-ticks { stroke: #b8ecff; stroke-width: 1; fill: none; }
.line-base { stroke: #5ccbff; stroke-width: 2; }
.line-glow { fill: none; stroke: rgba(92, 203, 255, .28); stroke-width: 14; }
.line-main { fill: none; stroke: #5ccbff; stroke-width: 2.500; stroke-linejoin: round; }
.line-dots circle { fill: #fff; stroke: #5ccbff; stroke-width: 2; }
.dot-core { fill: #5ccbff; }
.tip-blue { fill: #2a6ff9; filter: drop-shadow(0 4px 5px rgba(60, 70, 90, .25)); }
.tip-blue-text { font-size: 20px; fill: #fff; text-anchor: middle; }

/* area chart */
.card-area { height: 455px; }
.area-head {
  display: flex;
  justify-content: space-between;
  height: 92px;
  padding: 24px 0 0 21px;
}
.area-legend {
  display: flex;
  flex-direction: column;
  gap: 14px;
  width: 214px;
  margin: 0;
  padding: 0;
  list-style: none;
  font-size: 18px;
  line-height: 26px;
}
.al-item { display: flex; align-items: center; gap: 11px; white-space: nowrap; color: #333; }
.al-swatch { flex: none; width: 12px; height: 12px; }
.al-total { background: #9fe1fd; }
.al-region { background: #06acfb; }
.chart-area { width: 1193px; height: 361px; }
.grid-area line { stroke: #eef0f3; stroke-width: 1.500; }
.grid-over line { stroke: rgba(60, 100, 160, .07); stroke-width: 1.500; }
.area-back { fill: #b8e7fd; }
.area-ticks { stroke: rgba(0, 170, 255, .6); stroke-width: 1; fill: none; }
.marker-o { fill: #04a6fb; }
.marker-i { fill: #fff; }
.area-tip {
  position: absolute;
  left: 427px;
  top: 21px;
  width: 214px;
  height: 91px;
  padding: 0 0 0 24px;
  background: #e9f8ff;
  font-size: 18px;
  line-height: 31px;
  letter-spacing: .3px;
  white-space: nowrap;
  color: #333;
}
.at-title { padding-right: 32px; text-align: center; }
.at-row { position: relative; }
.at-dot {
  position: absolute;
  left: -14px;
  top: 12px;
  width: 8px;
  height: 8px;
  border-radius: 50%;
}
.at-a { background: #c2ecfd; }
.at-b { background: #73d2fc; }
```
